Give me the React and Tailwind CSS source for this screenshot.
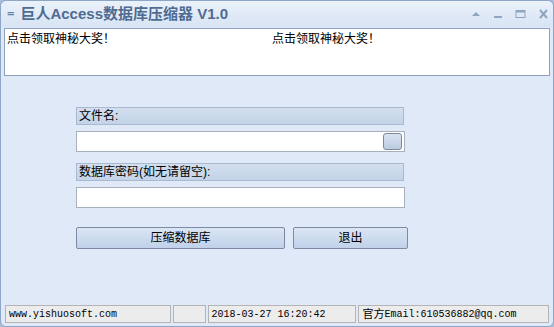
import React from 'react'

const cjk = "font-['SimSun','Liberation_Sans','Noto_Sans_CJK_SC',sans-serif]"

function Label({ children }) {
  return (
    <div className={`h-[18px] w-[328px] border border-[#a9b9cf] bg-gradient-to-b from-[#d3dfee] to-[#c3d3e9] px-[2px] text-[12px] leading-[16px] text-black ${cjk}`}>
      {children}
    </div>
  )
}

function Input({ browse }) {
  return (
    <div className="flex h-[21px] w-[329px] items-center justify-end border border-[#a6b0bf] bg-white pr-[2px]">
      {browse && (
        <div className="h-[17px] w-[19px] rounded-[3px] border border-[#7d8a9c] bg-gradient-to-b from-[#d9e3f1] to-[#bccbe1]" />
      )}
    </div>
  )
}

function Btn({ w, children }) {
  return (
    <button className={`${w} h-[22px] rounded-[2px] border border-[#7c8ba3] bg-gradient-to-b from-[#dbe6f4] to-[#c0d1ea] text-[12px] text-black ${cjk}`}>
      {children}
    </button>
  )
}

function Panel({ w, children, mono }) {
  return (
    <div className={`${w} flex h-[18px] items-center border border-[#b4b4b4] bg-[#ececec] px-[3px] text-[10px] text-black ${mono ? "font-['Liberation_Mono','Noto_Sans_CJK_SC',monospace]" : cjk}`}>
      {children}
    </div>
  )
}

export default function App() {
  return (
    <div className="h-[327px] w-[554px] overflow-hidden bg-[#a9bdd6]">
      <div className="flex h-[327px] w-[554px] flex-col rounded-[6px] border border-[#8ea6c6] bg-[#dfe9f7]">
        {/* title bar */}
        <div className="flex h-[26px] items-center rounded-t-[6px] bg-gradient-to-b from-[#eaf1fa] to-[#d8e4f4] pl-[6px] pr-[4px]">
          <span className="mr-[6px] -mt-[2px] text-[13px] font-bold leading-none text-[#6a84a6]">=</span>
          <span className={`text-[15px] font-bold text-[#4f6b92] ${cjk}`}>巨人Access数据库压缩器 V1.0</span>
          <div className="ml-auto flex items-center gap-[12px] text-[#8fa4c0]">
            <svg width="10" height="10" viewBox="0 0 10 10"><path d="M1 7 L5 3 L9 7 Z" fill="#8fa4c0" /></svg>
            <svg width="10" height="10" viewBox="0 0 10 10"><rect x="1" y="7" width="8" height="2" fill="#8fa4c0" /></svg>
            <svg width="11" height="10" viewBox="0 0 11 10"><rect x="1" y="1.5" width="9" height="7" fill="none" stroke="#8fa4c0" strokeWidth="1" /><rect x="1" y="1" width="9" height="2.5" fill="#8fa4c0" /></svg>
            <svg width="11" height="10" viewBox="0 0 11 10"><path d="M2 1 L9 9 M9 1 L2 9" stroke="#8fa4c0" strokeWidth="2" /></svg>
          </div>
        </div>

        {/* notice box */}
        <div className="mx-[3px] mt-[1px] flex h-[48px] border border-[#8fa2bb] bg-white pt-[2px] pl-[2px]">
          <span className={`w-[265px] text-[12px] leading-[16px] text-black ${cjk}`}>点击领取神秘大奖！</span>
          <span className={`text-[12px] leading-[16px] text-black ${cjk}`}>点击领取神秘大奖！</span>
        </div>

        {/* form */}
        <div className="ml-[75px] mt-[31px] flex flex-col">
          <Label>文件名:</Label>
          <div className="mt-[6px]"><Input browse /></div>
          <div className="mt-[11px]"><Label>数据库密码(如无请留空):</Label></div>
          <div className="mt-[6px]"><Input /></div>
          <div className="mt-[19px] flex gap-[8px]">
            <Btn w="w-[209px]">压缩数据库</Btn>
            <Btn w="w-[115px]">退出</Btn>
          </div>
        </div>

        {/* status bar */}
        <div className="mt-auto mb-[3px] flex gap-[2px] px-[4px]">
          <Panel w="w-[167px]" mono>www.yishuosoft.com</Panel>
          <Panel w="w-[33px]" />
          <Panel w="w-[150px]" mono>2018-03-27 16:20:42</Panel>
          <Panel w="w-[192px]">
            <span className="text-[11px]">官方</span>
            <span className="font-['Liberation_Mono',monospace]">Email:610536882@qq.com</span>
          </Panel>
        </div>
      </div>
    </div>
  )
}
